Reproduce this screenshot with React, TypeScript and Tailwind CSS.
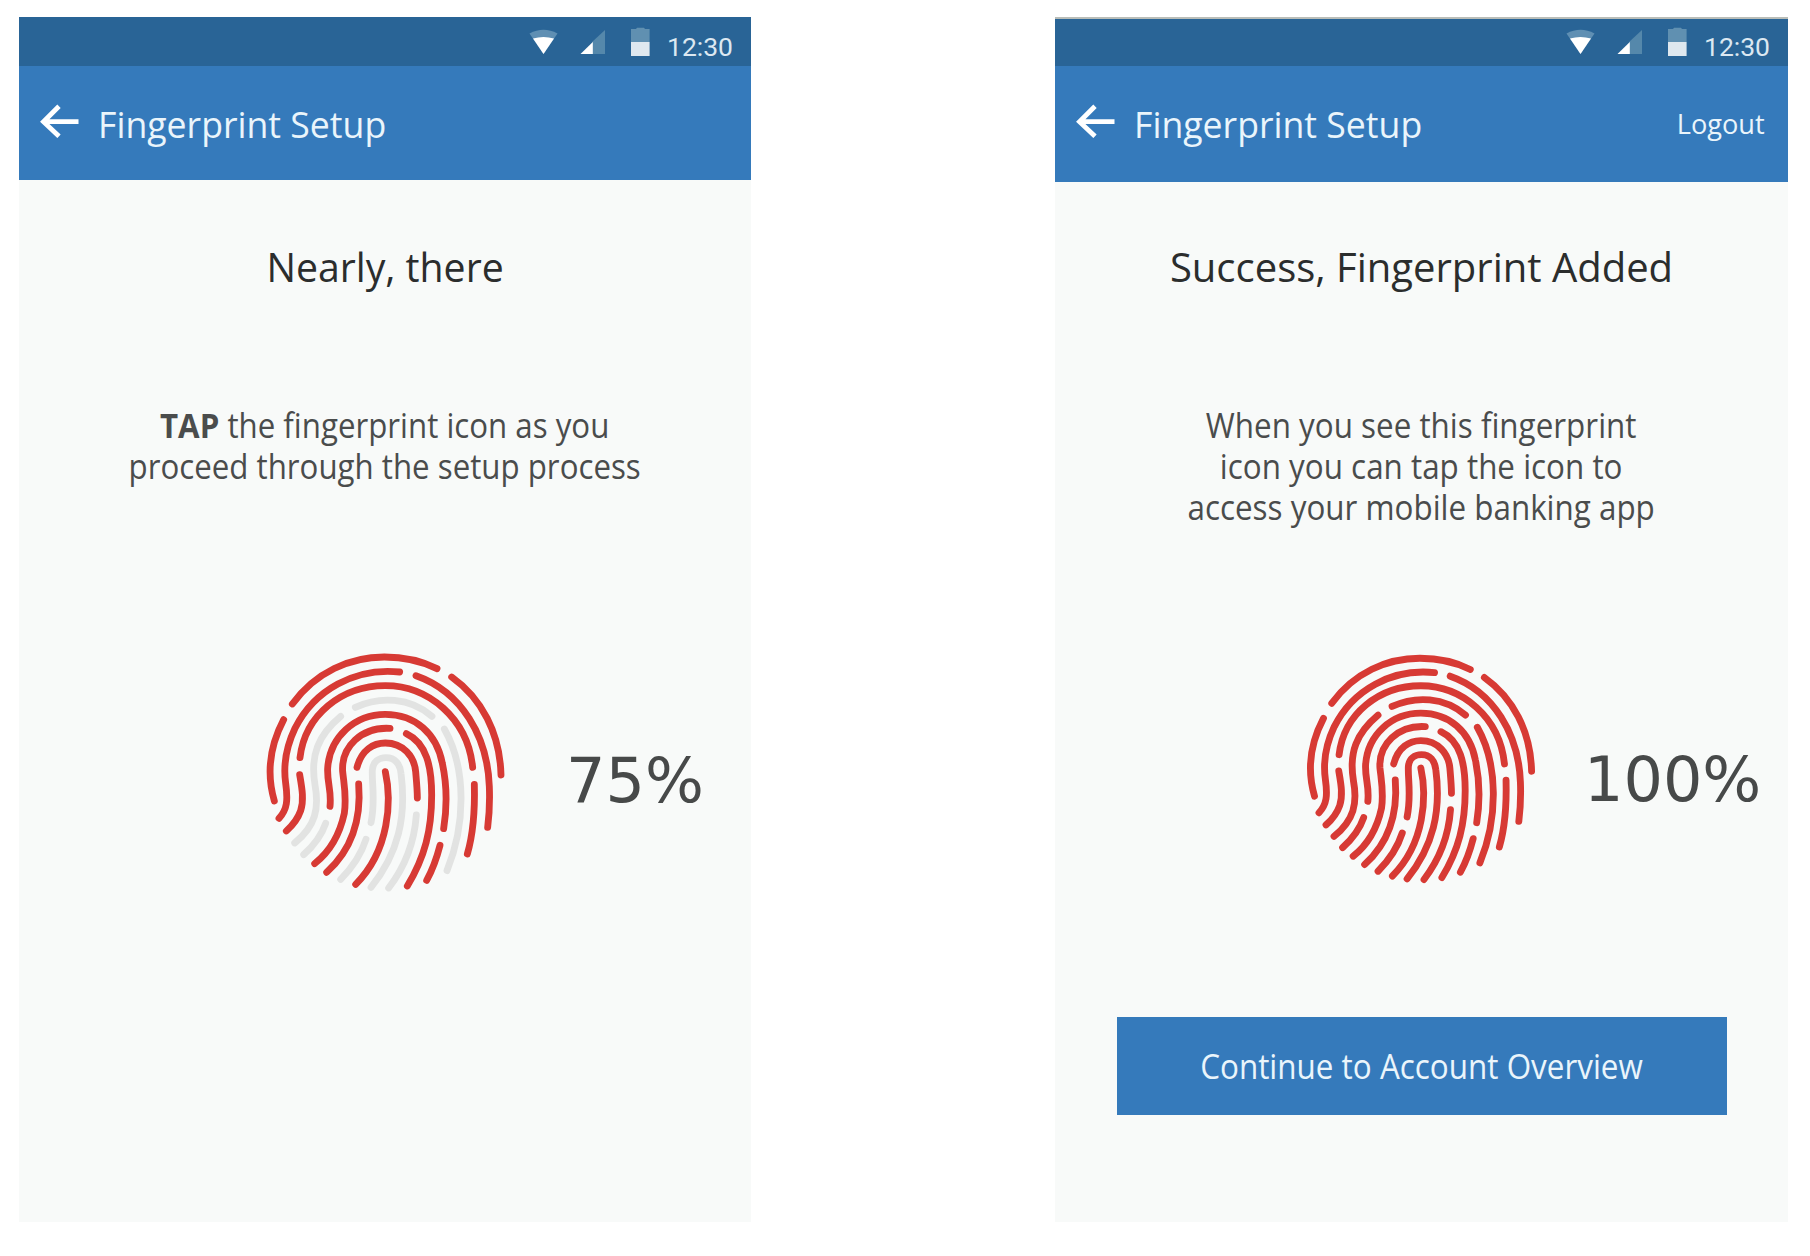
const RED = "#d73a34";
const GRAY = "#e2e3e2";

type Ridge = { d: string; pending?: boolean };

// Fingerprint ridges; `pending` ones stay gray until the scan is complete.
const RIDGES: Ridge[] = [
  { d: "M112 192 C182 96 285 51 388 51 C445 51 500 63 546 86" },
  { d: "M590 111 C680 175 735 280 738 405" },
  { d: "M86 239 C46 315 34 400 58 483" },
  { d: "M434 96 C300 82 178 150 120 265 C90 328 85 380 92 430 C99 480 97 508 72 535" },
  { d: "M483 107 C620 155 698 290 703 440 C705 490 702 530 698 562" },
  { d: "M135 353 C150 225 260 137 391 137 C520 137 638 235 653 382" },
  { d: "M134 404 C140 440 148 478 137 512 C128 538 112 557 94 573" },
  { d: "M658 433 C660 510 655 580 637 642" },
  { d: "M301 202 C375 168 465 172 531 229", pending: true },
  { d: "M257 229 C190 285 165 345 180 435 C193 505 182 558 119 609", pending: true },
  { d: "M568 267 C635 385 632 555 576 692", pending: true },
  { d: "M225 499 C230 450 216 430 218 385 C224 290 300 223 391 223 C480 223 545 280 562 370 C577 440 575 510 566 566" },
  { d: "M405 265 C320 260 258 320 263 395 C268 440 275 470 268 520 C255 580 225 635 179 671" },
  { d: "M454 281 C515 310 530 380 530 465 C530 570 510 650 457 738" },
  { d: "M306 382 C320 330 355 309 391 309 C445 309 478 350 482 395 C485 430 487 450 487 474" },
  { d: "M311 432 C318 520 300 620 215 697" },
  { d: "M348 548 C362 480 350 430 352 390 C354 365 372 353 393 353 C420 353 435 372 438 400 C455 530 430 640 348 742", pending: true },
  { d: "M391 395 C410 480 405 630 302 733" },
  { d: "M484 525 C478 610 450 680 401 744", pending: true },
  { d: "M555 616 C545 655 532 690 515 721" },
  { d: "M333 598 C318 645 290 685 257 718", pending: true },
  { d: "M212 550 C200 585 175 618 146 644", pending: true },
];

function Fingerprint({ complete, className }: { complete: boolean; className: string }) {
  return (
    <svg viewBox="0 0 780 780" className={className} fill="none" strokeWidth={complete ? 21.5 : 20.5} strokeLinecap="round">
      {RIDGES.map((r) => (
        <path key={r.d} d={r.d} stroke={r.pending && !complete ? GRAY : RED} />
      ))}
    </svg>
  );
}

function StatusIcons() {
  return (
    <svg viewBox="0 0 124 36" className="h-9 w-[124px]">
      <path d="M1.500 9.500 Q15.500 2 29.500 9.500 L15.500 30 Z" fill="#5f8fb3" />
      <path d="M5 14.500 Q15.500 11.500 26 14.500 L15.500 30 Z" fill="#fff" />
      <path d="M77 6 V30 H64 V18 Z" fill="#5588ab" />
      <path d="M64.800 18 V30 H52.500 Z" fill="#fff" />
      <path d="M103 5 H108 L109 3.800 H116 L117 5 H121.600 V18 H103 Z" fill="#6090b1" />
      <path d="M103 18 H121.600 V32 H103 Z" fill="#dfe8ef" />
    </svg>
  );
}

function TopBars({ logout }: { logout?: boolean }) {
  return (
    <>
      <div className={`flex items-end justify-end bg-[#296496] pr-[18px] ${logout ? "h-[47px]" : "h-[49px]"}`}>
        <div className="mb-1.5">
          <StatusIcons />
        </div>
        <span className="ml-[15px] h-[49px] font-[Roboto] text-[26.500px] leading-[60px] text-[#dce8f1]">12:30</span>
      </div>
      <header
        className={`flex items-start justify-between bg-[#357abb] pr-[23px] pl-[21px] leading-[115px] whitespace-nowrap text-[#eaf5fb] ${
          logout ? "h-[116px]" : "h-[114px]"
        }`}
      >
        <div className="flex">
          <svg viewBox="0 0 40 34" className="mt-[38px] h-[34px] w-10" fill="none" stroke="#fff" strokeWidth="4.800">
            <path d="M38.500 17.700 H4 M19 2.300 L3.500 17.700 L19 32.300" />
          </svg>
          <h1 className="ml-[18px] origin-left scale-x-[0.963] text-[37px]">Fingerprint Setup</h1>
        </div>
        {logout && <button className="origin-right scale-x-[0.97] text-[28px] leading-[114px]">Logout</button>}
      </header>
    </>
  );
}

export default function App() {
  return (
    <div className="flex h-[1256px] w-[1810px] items-start gap-[304px] bg-white pt-[17px] pl-[19px] font-['Open_Sans',sans-serif]">
      <section className="h-[1205px] w-[732px] bg-[#f8faf9]">
        <TopBars />
        <div className="flex flex-col items-center pt-[63px] whitespace-nowrap">
          <h2 className="scale-x-[0.98] text-[40px] leading-[48px] font-[450] text-[#2b2d2d]">Nearly, there</h2>
          <p className="mt-[114px] h-[123px] scale-x-[0.919] text-center text-[34px] leading-[41px] text-[#4a4c4c]">
            <b>TAP</b> the fingerprint icon as you
            <br />
            proceed through the setup process
          </p>
          <div className="mt-[112px] flex w-full items-start">
            <Fingerprint complete={false} className="ml-[236px] size-[260px]" />
            <span className="mt-[105px] ml-[51px] origin-left font-['DejaVu_Sans'] text-[62px] leading-[72px] text-[#474949]">
              75%
            </span>
          </div>
        </div>
      </section>

      <section className="h-[1205px] w-[733px] border-t-2 border-[#b9bdb8] bg-[#f8faf9]">
        <TopBars logout />
        <div className="flex flex-col items-center pt-[61px] whitespace-nowrap">
          <h2 className="text-[40px] leading-[48px] font-[450] text-[#2b2d2d]">Success, Fingerprint Added</h2>
          <p className="mt-[114px] h-[123px] scale-x-[0.923] text-center text-[34px] leading-[41px] text-[#4a4c4c]">
            When you see this fingerprint
            <br />
            icon you can tap the icon to
            <br />
            access your mobile banking app
          </p>
          <div className="mt-[114px] flex w-full items-start">
            <Fingerprint complete className="ml-[241px] size-[249px]" />
            <span className="mt-[102px] ml-[39px] origin-left font-['DejaVu_Sans'] text-[62px] leading-[72px] text-[#474949]">
              100%
            </span>
          </div>
          <button className="mt-[126px] h-[98px] w-[610px] bg-[#357abb] text-[34px] leading-[98px] text-[#eaf5fb]">
            <span className="inline-block scale-x-[0.924]">Continue to Account Overview</span>
          </button>
        </div>
      </section>
    </div>
  );
}
